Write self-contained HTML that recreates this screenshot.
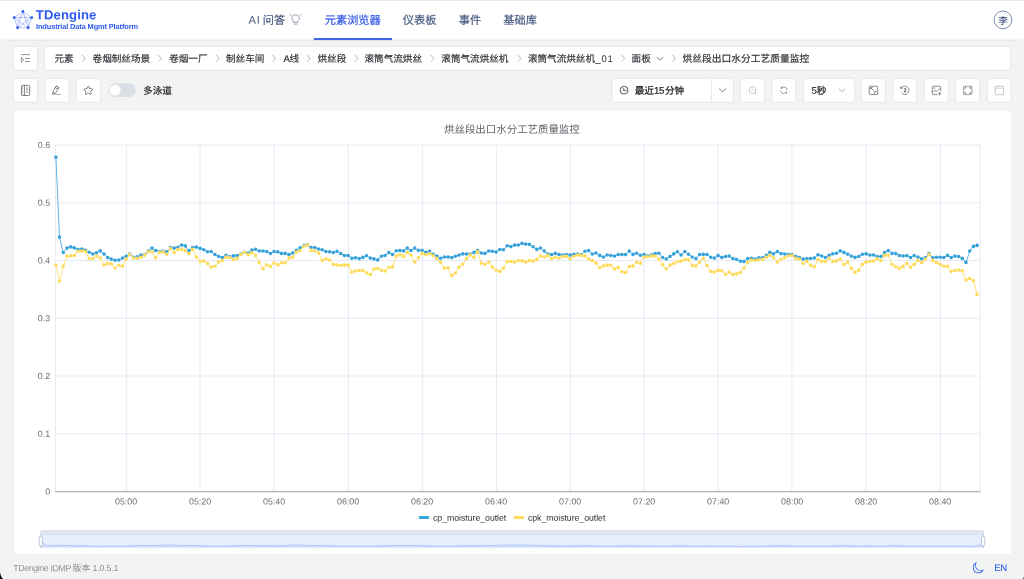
<!DOCTYPE html>
<html lang="zh-CN">
<head>
<meta charset="utf-8">
<title>TDengine IDMP</title>
<style>
html,body{margin:0;padding:0}
body{width:1024px;height:579px;overflow:hidden;position:relative;background:#f2f3f3;font-family:"Liberation Sans",sans-serif;color:#303133}
section,header,footer,nav{position:absolute;left:0;top:0;width:1024px;height:579px;pointer-events:none}
svg.layer{position:absolute;left:0;top:0;display:block;overflow:hidden;will-change:transform}
svg.layer text{white-space:pre;text-rendering:geometricPrecision}
</style>
</head>
<body>
<header>
<svg class="layer" width="1024" height="579" viewBox="0 0 1024 579" font-family="Liberation Sans, Noto Sans CJK SC, sans-serif">
<rect x="0" y="0" width="1024" height="0.9" fill="#e6e6e6"/>
<rect x="0" y="0.9" width="1024" height="38.8" fill="#fff"/>
<rect x="0" y="39.6" width="1024" height="1.2" fill="#e7e8ec"/>
<path d="M0 40.6v3.8q0 -3.4 3.6 -3.6zM1024 40.6v3.8q0 -3.4 -3.6 -3.6z" fill="#fbfbfc"/>
<g stroke="#3d66f2" stroke-width="0.5" fill="none" opacity="0.75"><path d="M22.9 11.4L31.75 17.6L28.2 27.75L17.6 27.75L14.1 17.6Z"/><path d="M22.9 11.4L28.2 27.75L14.1 17.6L31.75 17.6L17.6 27.75Z"/><path d="M17.6 27.75C16.2 23 18 18.5 22.9 13.8C27.8 18.5 29.6 23 28.2 27.75" opacity="0.6"/></g>
<g fill="#2b59f0"><circle cx="22.9" cy="11.4" r="1.4"/><circle cx="14.1" cy="17.6" r="1.4"/><circle cx="31.75" cy="17.6" r="1.4"/><circle cx="17.6" cy="27.75" r="1.4"/><circle cx="28.2" cy="27.75" r="1.4"/></g>
<text x="35.80" y="19.20" transform="rotate(0.05 35.80 19.20)" font-size="13.1" fill="#2b59f0" font-weight="bold" textLength="60.60" lengthAdjust="spacing">TDengine</text>
<text x="36.00" y="28.95" transform="rotate(0.05 36.00 28.95)" font-size="7.4" fill="#2b59f0" font-weight="bold" textLength="102.00" lengthAdjust="spacing">Industrial Data Mgmt Platform</text>
<text x="248.50" y="23.65" transform="rotate(0.05 248.50 23.65)" font-size="11.2" fill="#485c80" textLength="11.40" lengthAdjust="spacing">AI</text>
<text x="262.70" y="23.96" font-size="11.2" fill="#485c80" stroke="#485c80" stroke-width="0.2">问答</text>
<g fill="none" stroke="#6f7d99" stroke-width="0.7" stroke-linecap="round" transform="translate(289.6 13)"><path d="M4 8.3C2.9 7.6 2.3 6.5 2.3 5.3C2.3 3.3 3.9 1.8 6 1.8C8.1 1.8 9.7 3.3 9.7 5.3C9.7 6.5 9.1 7.6 8 8.3V9.4H4Z"/><path d="M4.6 11.1H7.4"/><path d="M0.6 1.6L1.8 2.4M11.4 1.6L10.2 2.4"/></g>
<text x="324.80" y="23.96" font-size="11.2" fill="#3358e6" stroke="#3358e6" stroke-width="0.2">元素浏览器</text>
<rect x="313.7" y="38" width="78.3" height="2.05" fill="#4066e8"/>
<text x="402.80" y="23.96" font-size="11.2" fill="#485c80" stroke="#485c80" stroke-width="0.2">仪表板</text>
<text x="458.80" y="23.96" font-size="11.2" fill="#485c80" stroke="#485c80" stroke-width="0.2">事件</text>
<text x="503.30" y="23.96" font-size="11.2" fill="#485c80" stroke="#485c80" stroke-width="0.2">基础库</text>
<circle cx="1002.95" cy="19.85" r="8.85" fill="#fff" stroke="#5a7199" stroke-width="0.8"/>
<text x="998.20" y="23.51" font-size="9.5" fill="#41587f" stroke="#41587f" stroke-width="0.17">李</text>
</svg>
</header>
<nav aria-label="breadcrumb">
<svg class="layer" width="1024" height="579" viewBox="0 0 1024 579" font-family="Liberation Sans, Noto Sans CJK SC, sans-serif">
<rect x="13.50" y="46.40" width="24.10" height="24.10" rx="2.6" fill="#fff" stroke="#e2e4ee" stroke-width="0.9"/>
<g fill="none" stroke="#6c6f76" stroke-width="0.75"><path d="M21 54.6H29.9M25.1 58.5H29.9M25.1 61.6H29.9"/><path d="M21.3 57.3V62.2L23.9 59.75Z" stroke-linejoin="round"/></g>
<rect x="44.60" y="46.40" width="965.70" height="24.10" rx="2.6" fill="#fff" stroke="#e2e4ee" stroke-width="0.9"/>
<text x="54.50" y="62.10" font-size="9.6" fill="#2f3237" stroke="#2f3237" stroke-width="0.17">元素</text>
<text x="92.60" y="62.10" font-size="9.6" fill="#2f3237" stroke="#2f3237" stroke-width="0.17">卷烟制丝场景</text>
<text x="169.20" y="62.10" font-size="9.6" fill="#2f3237" stroke="#2f3237" stroke-width="0.17">卷烟一厂</text>
<text x="226.00" y="62.10" font-size="9.6" fill="#2f3237" stroke="#2f3237" stroke-width="0.17">制丝车间</text>
<path transform="translate(78.85 53.65) scale(0.009375)" d="M340.864 149.312a30.592 30.592 0 0 0 0 42.752L652.736 512 340.864 831.872a30.592 30.592 0 0 0 0 42.752 29.12 29.12 0 0 0 41.728 0L714.24 534.336a32 32 0 0 0 0-44.672L382.592 149.376a29.12 29.12 0 0 0-41.728 0z" fill="#a3a6ad"/>
<path transform="translate(154.95 53.65) scale(0.009375)" d="M340.864 149.312a30.592 30.592 0 0 0 0 42.752L652.736 512 340.864 831.872a30.592 30.592 0 0 0 0 42.752 29.12 29.12 0 0 0 41.728 0L714.24 534.336a32 32 0 0 0 0-44.672L382.592 149.376a29.12 29.12 0 0 0-41.728 0z" fill="#a3a6ad"/>
<path transform="translate(212.85 53.65) scale(0.009375)" d="M340.864 149.312a30.592 30.592 0 0 0 0 42.752L652.736 512 340.864 831.872a30.592 30.592 0 0 0 0 42.752 29.12 29.12 0 0 0 41.728 0L714.24 534.336a32 32 0 0 0 0-44.672L382.592 149.376a29.12 29.12 0 0 0-41.728 0z" fill="#a3a6ad"/>
<path transform="translate(269.15 53.65) scale(0.009375)" d="M340.864 149.312a30.592 30.592 0 0 0 0 42.752L652.736 512 340.864 831.872a30.592 30.592 0 0 0 0 42.752 29.12 29.12 0 0 0 41.728 0L714.24 534.336a32 32 0 0 0 0-44.672L382.592 149.376a29.12 29.12 0 0 0-41.728 0z" fill="#a3a6ad"/>
<path transform="translate(303.65 53.65) scale(0.009375)" d="M340.864 149.312a30.592 30.592 0 0 0 0 42.752L652.736 512 340.864 831.872a30.592 30.592 0 0 0 0 42.752 29.12 29.12 0 0 0 41.728 0L714.24 534.336a32 32 0 0 0 0-44.672L382.592 149.376a29.12 29.12 0 0 0-41.728 0z" fill="#a3a6ad"/>
<path transform="translate(351.35 53.65) scale(0.009375)" d="M340.864 149.312a30.592 30.592 0 0 0 0 42.752L652.736 512 340.864 831.872a30.592 30.592 0 0 0 0 42.752 29.12 29.12 0 0 0 41.728 0L714.24 534.336a32 32 0 0 0 0-44.672L382.592 149.376a29.12 29.12 0 0 0-41.728 0z" fill="#a3a6ad"/>
<path transform="translate(427.55 53.65) scale(0.009375)" d="M340.864 149.312a30.592 30.592 0 0 0 0 42.752L652.736 512 340.864 831.872a30.592 30.592 0 0 0 0 42.752 29.12 29.12 0 0 0 41.728 0L714.24 534.336a32 32 0 0 0 0-44.672L382.592 149.376a29.12 29.12 0 0 0-41.728 0z" fill="#a3a6ad"/>
<path transform="translate(514.45 53.65) scale(0.009375)" d="M340.864 149.312a30.592 30.592 0 0 0 0 42.752L652.736 512 340.864 831.872a30.592 30.592 0 0 0 0 42.752 29.12 29.12 0 0 0 41.728 0L714.24 534.336a32 32 0 0 0 0-44.672L382.592 149.376a29.12 29.12 0 0 0-41.728 0z" fill="#a3a6ad"/>
<path transform="translate(618.15 53.65) scale(0.009375)" d="M340.864 149.312a30.592 30.592 0 0 0 0 42.752L652.736 512 340.864 831.872a30.592 30.592 0 0 0 0 42.752 29.12 29.12 0 0 0 41.728 0L714.24 534.336a32 32 0 0 0 0-44.672L382.592 149.376a29.12 29.12 0 0 0-41.728 0z" fill="#a3a6ad"/>
<path transform="translate(669.05 53.65) scale(0.009375)" d="M340.864 149.312a30.592 30.592 0 0 0 0 42.752L652.736 512 340.864 831.872a30.592 30.592 0 0 0 0 42.752 29.12 29.12 0 0 0 41.728 0L714.24 534.336a32 32 0 0 0 0-44.672L382.592 149.376a29.12 29.12 0 0 0-41.728 0z" fill="#a3a6ad"/>
<text x="283.40" y="61.90" transform="rotate(0.05 283.40 61.90)" font-size="9.6" fill="#2f3237" stroke="#2f3237" stroke-width="0.2">A</text>
<text x="289.50" y="62.10" font-size="9.6" fill="#2f3237" stroke="#2f3237" stroke-width="0.17">线</text>
<text x="317.50" y="62.10" font-size="9.6" fill="#2f3237" stroke="#2f3237" stroke-width="0.17">烘丝段</text>
<text x="364.50" y="62.10" font-size="9.6" fill="#2f3237" stroke="#2f3237" stroke-width="0.17">滚筒气流烘丝</text>
<text x="441.30" y="62.10" font-size="9.6" fill="#2f3237" stroke="#2f3237" stroke-width="0.17">滚筒气流烘丝机</text>
<text x="527.90" y="62.10" font-size="9.6" fill="#2f3237" stroke="#2f3237" stroke-width="0.17">滚筒气流烘丝机</text>
<text x="595.30" y="61.90" transform="rotate(0.05 595.30 61.90)" font-size="9.6" fill="#2f3237" textLength="17.60" lengthAdjust="spacing">_01</text>
<text x="631.60" y="62.10" font-size="9.6" fill="#2f3237" stroke="#2f3237" stroke-width="0.17">面板</text>
<path transform="translate(655.20 53.75) scale(0.009375)" d="M831.872 340.864 512 652.672 192.128 340.864a30.592 30.592 0 0 0-42.752 0 29.12 29.12 0 0 0 0 41.6L489.664 714.24a32 32 0 0 0 44.672 0l340.288-331.712a29.12 29.12 0 0 0 0-41.728 30.592 30.592 0 0 0-42.752 0z" fill="#5d6066"/>
<text x="682.50" y="62.16" font-size="9.75" fill="#2f3237" stroke="#2f3237" stroke-width="0.18">烘丝段出口水分工艺质量监控</text>
</svg>
</nav>
<section aria-label="toolbar">
<svg class="layer" width="1024" height="579" viewBox="0 0 1024 579" font-family="Liberation Sans, Noto Sans CJK SC, sans-serif">
<rect x="13.50" y="78.20" width="24.10" height="24.10" rx="2.6" fill="#fff" stroke="#e2e4ee" stroke-width="0.9"/>
<rect x="44.90" y="78.20" width="24.10" height="24.10" rx="2.6" fill="#fff" stroke="#e2e4ee" stroke-width="0.9"/>
<rect x="76.40" y="78.20" width="24.10" height="24.10" rx="2.6" fill="#fff" stroke="#e2e4ee" stroke-width="0.9"/>
<g fill="none" stroke="#5d6066" stroke-width="0.8"><rect x="21.5" y="85.4" width="8.2" height="10.1" rx="1"/><path d="M24.4 85.4V95.5"/><path d="M26 88.05H28.2M26 90H28.2M26 92.1H28.2" stroke-width="0.7"/><path d="M22.3 85.8V95.1" stroke-width="0.5" opacity="0.6"/></g>
<path transform="translate(51.05 85.05) scale(0.010449)" d="m199.04 672.64 193.984 112 224-387.968-193.92-112-224 388.032zm-23.872 60.16 32.896 148.288 144.896-45.696zM455.04 229.248l193.92 112 56.704-98.112-193.984-112-56.64 98.112zM104.32 708.8l384-665.024 304.768 175.936L409.152 884.8h.064l-248.448 78.336zm384 254.272v-64h448v64h-448z" fill="#5d6066"/>
<path transform="translate(83.00 84.95) scale(0.010449)" d="m512 747.84 228.16 119.936a6.4 6.4 0 0 0 9.28-6.72l-43.52-254.08 184.512-179.904a6.4 6.4 0 0 0-3.52-10.88l-255.104-37.12L517.76 147.904a6.4 6.4 0 0 0-11.52 0L392.192 379.072l-255.104 37.12a6.4 6.4 0 0 0-3.52 10.88L318.08 606.976l-43.584 254.08a6.4 6.4 0 0 0 9.28 6.72zM313.6 924.48a70.4 70.4 0 0 1-102.144-74.24l37.888-220.928L88.96 472.96A70.4 70.4 0 0 1 128 352.896l221.76-32.256 99.2-200.96a70.4 70.4 0 0 1 126.208 0l99.2 200.96 221.824 32.256a70.4 70.4 0 0 1 39.04 120.064L774.72 629.376l37.888 220.928a70.4 70.4 0 0 1-102.144 74.24L512 820.096l-198.4 104.32z" fill="#5d6066"/>
<rect x="108.4" y="83.3" width="27.4" height="13.8" rx="6.9" fill="#dcdfe6"/><circle cx="115.1" cy="90.2" r="5.55" fill="#fff"/>
<text x="143.20" y="94.00" font-size="9.6" font-weight="500" fill="#26292e" stroke="#26292e" stroke-width="0.1">多泳道</text>
<rect x="612.00" y="78.20" width="121.40" height="24.10" rx="2.6" fill="#fff" stroke="#e2e4ee" stroke-width="0.9"/>
<path d="M711.4 78.6V101.9" stroke="#e2e4ee" stroke-width="0.9"/>
<path transform="translate(619.40 85.55) scale(0.009180)" d="M512 896a384 384 0 1 0 0-768 384 384 0 0 0 0 768m0 64a448 448 0 1 1 0-896 448 448 0 0 1 0 896M480 256a32 32 0 0 1 32 32v256a32 32 0 0 1-64 0V288a32 32 0 0 1 32-32M480 512h256q32 0 32 32t-32 32H480q-32 0-32-32t32-32" fill="#3f4247" stroke="#3f4247" stroke-width="26"/>
<text x="634.70" y="93.90" font-size="9.6" fill="#26292e" stroke="#26292e" stroke-width="0.27">最近</text>
<text x="654.10" y="93.75" transform="rotate(0.05 654.10 93.75)" font-size="9.7" fill="#26292e" textLength="10.30" lengthAdjust="spacing" stroke="#26292e" stroke-width="0.25">15</text>
<text x="664.90" y="93.90" font-size="9.6" fill="#26292e" stroke="#26292e" stroke-width="0.27">分钟</text>
<path transform="translate(717.70 85.30) scale(0.009375)" d="M831.872 340.864 512 652.672 192.128 340.864a30.592 30.592 0 0 0-42.752 0 29.12 29.12 0 0 0 0 41.6L489.664 714.24a32 32 0 0 0 44.672 0l340.288-331.712a29.12 29.12 0 0 0 0-41.728 30.592 30.592 0 0 0-42.752 0z" fill="#5d6066"/>
<rect x="740.50" y="78.20" width="24.00" height="24.10" rx="2.6" fill="#fff" stroke="#e2e4ee" stroke-width="0.9"/>
<path transform="translate(748.25 85.85) scale(0.008789)" d="m795.904 750.72 124.992 124.928a32 32 0 0 1-45.248 45.248L750.656 795.904a416 416 0 1 1 45.248-45.248zM480 832a352 352 0 1 0 0-704 352 352 0 0 0 0 704M352 448h256a32 32 0 0 1 0 64H352a32 32 0 0 1 0-64" fill="#96999f"/>
<rect x="771.80" y="78.20" width="24.10" height="24.10" rx="2.6" fill="#fff" stroke="#e2e4ee" stroke-width="0.9"/>
<path transform="translate(779.05 85.40) scale(0.009375)" d="M771.776 794.88A384 384 0 0 1 128 512h64a320 320 0 0 0 555.712 216.448H654.72a32 32 0 1 1 0-64h149.056a32 32 0 0 1 32 32v148.928a32 32 0 1 1-64 0v-50.56zM276.288 295.616h92.992a32 32 0 0 1 0 64H220.16a32 32 0 0 1-32-32V178.56a32 32 0 0 1 64 0v50.56A384 384 0 0 1 896.128 512h-64a320 320 0 0 0-555.776-216.384z" fill="#6b6e74"/>
<rect x="803.60" y="78.20" width="51.00" height="24.10" rx="2.6" fill="#fff" stroke="#e2e4ee" stroke-width="0.9"/>
<text x="811.40" y="93.75" transform="rotate(0.05 811.40 93.75)" font-size="9.7" fill="#26292e" stroke="#26292e" stroke-width="0.12">5</text>
<text x="816.70" y="93.90" font-size="9.6" fill="#26292e" stroke="#26292e" stroke-width="0.27">秒</text>
<path transform="translate(837.60 85.60) scale(0.008789)" d="M831.872 340.864 512 652.672 192.128 340.864a30.592 30.592 0 0 0-42.752 0 29.12 29.12 0 0 0 0 41.6L489.664 714.24a32 32 0 0 0 44.672 0l340.288-331.712a29.12 29.12 0 0 0 0-41.728 30.592 30.592 0 0 0-42.752 0z" fill="#acafb5"/>
<rect x="861.50" y="78.20" width="23.90" height="24.10" rx="2.6" fill="#fff" stroke="#e2e4ee" stroke-width="0.9"/>
<rect x="892.80" y="78.20" width="23.90" height="24.10" rx="2.6" fill="#fff" stroke="#e2e4ee" stroke-width="0.9"/>
<rect x="924.40" y="78.20" width="23.90" height="24.10" rx="2.6" fill="#fff" stroke="#e2e4ee" stroke-width="0.9"/>
<rect x="955.70" y="78.20" width="23.90" height="24.10" rx="2.6" fill="#fff" stroke="#e2e4ee" stroke-width="0.9"/>
<rect x="987.30" y="78.20" width="23.90" height="24.10" rx="2.6" fill="#fff" stroke="#e2e4ee" stroke-width="0.9"/>
<g fill="none" stroke="#6b6e74" stroke-width="0.8"><path d="M874.2 94.6H870.2Q869.2 94.6 869.2 93.6V87.2Q869.2 86.2 870.2 86.2H876.7Q877.7 86.2 877.7 87.2V91.2"/><rect x="874.4" y="91.5" width="3.3" height="3.1" rx="0.6"/><path d="M873.8 90.8L870.6 87.6M870.6 89.6V87.6H872.6"/></g>
<g fill="none" stroke="#6b6e74" stroke-width="0.75"><path d="M901.4 87.9A4.15 4.15 0 1 1 901.4 92.7"/><path d="M900.3 86.5L900.6 88.5L902.5 88.2Z" fill="#6b6e74" stroke-width="0.4"/></g>
<text x="905.00" y="92.20" transform="rotate(0.05 905.00 92.20)" font-size="5.7" fill="#55585e" font-weight="bold" text-anchor="middle">2</text>
<g fill="none" stroke="#6b6e74" stroke-width="0.8"><path d="M937.6 94.6H933.2Q932.2 94.6 932.2 93.6V87.2Q932.2 86.2 933.2 86.2H939.7Q940.7 86.2 940.7 87.2V91.4"/><path d="M932.4 92.6L935 90.3L936.6 91.6L940.5 88" stroke-width="0.7"/><circle cx="934.3" cy="88.2" r="0.55" stroke-width="0.6"/><path d="M939.6 92.3V95.3M938.1 93.8H941.1"/></g>
<g fill="none" stroke="#7d8086" stroke-width="0.75"><rect x="963.5" y="86.2" width="8.5" height="8.4" rx="0.8"/><path d="M964.6 87.3h2l-2 2ZM970.9 87.3v2l-2 -2ZM970.9 93.5h-2l2 -2ZM964.6 93.5v-2l2 2Z" fill="#63666c" stroke="none"/></g>
<g fill="none" stroke="#b4b7bd" stroke-width="0.8"><rect x="995.2" y="86.2" width="8.4" height="8.5" rx="1.1"/><path d="M995.2 88.2H1003.6" stroke-width="0.6"/></g>
</svg>
</section>
<section aria-label="chart">
<svg class="layer" width="1024" height="579" viewBox="0 0 1024 579" font-family="Liberation Sans, Noto Sans CJK SC, sans-serif">
<rect x="13.7" y="110.3" width="997.9" height="444.0" rx="2.8" fill="#fff" stroke="#ebecef" stroke-width="0.6"/>
<text x="444.07" y="133.37" font-size="10.45" fill="#5c5f66">烘丝段出口水分工艺质量监控</text>
<path d="M55.40 433.75H980.20M55.40 376.00H980.20M55.40 318.25H980.20M55.40 260.50H980.20M55.40 202.75H980.20M55.40 145.00H980.20M55.40 145.00V491.50M126.40 145.00V491.50M200.00 145.00V491.50M274.10 145.00V491.50M348.40 145.00V491.50M422.40 145.00V491.50M496.40 145.00V491.50M570.40 145.00V491.50M644.10 145.00V491.50M717.90 145.00V491.50M791.90 145.00V491.50M866.25 145.00V491.50M940.50 145.00V491.50M980.20 145.00V491.50" stroke="#e3e8f3" stroke-width="0.9" fill="none"/>
<path d="M55.10 491.72H980.50" stroke="#74767f" stroke-width="0.74" fill="none"/>
<g>
<text x="50.20" y="494.50" transform="rotate(0.05 50.20 494.50)" font-size="8.9" fill="#6e7079" text-anchor="end">0</text>
<text x="50.20" y="436.75" transform="rotate(0.05 50.20 436.75)" font-size="8.9" fill="#6e7079" text-anchor="end">0.1</text>
<text x="50.20" y="379.00" transform="rotate(0.05 50.20 379.00)" font-size="8.9" fill="#6e7079" text-anchor="end">0.2</text>
<text x="50.20" y="321.25" transform="rotate(0.05 50.20 321.25)" font-size="8.9" fill="#6e7079" text-anchor="end">0.3</text>
<text x="50.20" y="263.50" transform="rotate(0.05 50.20 263.50)" font-size="8.9" fill="#6e7079" text-anchor="end">0.4</text>
<text x="50.20" y="205.75" transform="rotate(0.05 50.20 205.75)" font-size="8.9" fill="#6e7079" text-anchor="end">0.5</text>
<text x="50.20" y="148.00" transform="rotate(0.05 50.20 148.00)" font-size="8.9" fill="#6e7079" text-anchor="end">0.6</text>
<text x="126.10" y="504.60" transform="rotate(0.05 126.10 504.60)" font-size="8.9" fill="#6e7079" text-anchor="middle">05:00</text>
<text x="200.11" y="504.60" transform="rotate(0.05 200.11 504.60)" font-size="8.9" fill="#6e7079" text-anchor="middle">05:20</text>
<text x="274.12" y="504.60" transform="rotate(0.05 274.12 504.60)" font-size="8.9" fill="#6e7079" text-anchor="middle">05:40</text>
<text x="348.13" y="504.60" transform="rotate(0.05 348.13 504.60)" font-size="8.9" fill="#6e7079" text-anchor="middle">06:00</text>
<text x="422.14" y="504.60" transform="rotate(0.05 422.14 504.60)" font-size="8.9" fill="#6e7079" text-anchor="middle">06:20</text>
<text x="496.15" y="504.60" transform="rotate(0.05 496.15 504.60)" font-size="8.9" fill="#6e7079" text-anchor="middle">06:40</text>
<text x="570.16" y="504.60" transform="rotate(0.05 570.16 504.60)" font-size="8.9" fill="#6e7079" text-anchor="middle">07:00</text>
<text x="644.17" y="504.60" transform="rotate(0.05 644.17 504.60)" font-size="8.9" fill="#6e7079" text-anchor="middle">07:20</text>
<text x="718.18" y="504.60" transform="rotate(0.05 718.18 504.60)" font-size="8.9" fill="#6e7079" text-anchor="middle">07:40</text>
<text x="792.19" y="504.60" transform="rotate(0.05 792.19 504.60)" font-size="8.9" fill="#6e7079" text-anchor="middle">08:00</text>
<text x="866.20" y="504.60" transform="rotate(0.05 866.20 504.60)" font-size="8.9" fill="#6e7079" text-anchor="middle">08:20</text>
<text x="940.21" y="504.60" transform="rotate(0.05 940.21 504.60)" font-size="8.9" fill="#6e7079" text-anchor="middle">08:40</text>
</g>
<path d="M55.9 157.2L59.5 237.1L63.2 252.5L67.0 248.1L70.7 246.9L74.3 247.9L78.0 249.4L81.8 249.0L85.5 250.4L89.2 252.2L92.8 254.0L96.5 252.8L100.2 250.9L104.0 254.0L107.7 257.5L111.3 259.1L115.0 260.2L118.8 260.0L122.5 258.0L126.2 256.2L129.8 254.0L133.6 257.2L137.2 256.9L140.9 255.1L144.7 254.6L148.3 251.0L152.0 248.1L155.7 250.5L159.4 251.5L163.1 251.0L166.8 251.9L170.5 247.5L174.2 248.1L177.9 247.2L181.6 245.0L185.3 245.9L189.0 250.6L192.7 247.5L196.4 247.1L200.1 248.4L203.8 249.8L207.5 251.8L211.2 251.5L214.9 254.5L218.6 256.5L222.3 257.5L226.0 255.2L229.7 256.9L233.4 255.9L237.1 255.5L240.8 254.0L244.5 252.2L248.2 253.1L251.9 250.0L255.6 249.2L259.3 251.0L263.0 251.0L266.7 251.6L270.4 253.5L274.1 251.5L277.8 251.9L281.5 253.4L285.2 253.4L288.9 254.6L292.6 253.0L296.3 250.4L300.0 247.8L303.7 245.6L307.4 244.8L311.1 247.6L314.8 247.5L318.5 249.0L322.2 249.8L325.9 251.5L329.6 251.8L333.3 252.6L337.0 251.2L340.7 253.5L344.4 255.5L348.1 255.5L351.8 258.2L355.5 257.8L359.2 258.6L362.9 257.4L366.6 255.8L370.3 258.1L374.0 258.9L377.7 259.9L381.4 256.2L385.1 255.5L388.8 252.6L392.5 254.5L396.2 250.8L399.9 250.5L403.6 250.9L407.3 248.1L411.0 250.5L414.7 248.1L418.4 250.4L422.1 250.2L425.8 252.2L429.5 251.4L433.2 254.4L436.9 256.0L440.6 258.2L444.3 257.0L448.0 257.1L451.7 257.6L455.4 256.2L459.1 255.1L462.8 253.9L466.5 254.0L470.2 254.0L473.9 252.4L477.6 250.5L481.3 253.0L485.0 253.4L488.7 251.0L492.4 251.2L496.1 252.0L499.8 249.5L503.5 249.8L507.2 245.8L510.9 246.6L514.6 245.1L518.3 245.0L522.0 243.4L525.7 244.1L529.4 244.4L533.1 246.8L536.8 249.4L540.5 248.0L544.2 251.1L547.9 254.0L551.6 254.5L555.3 253.4L559.0 254.5L562.7 255.0L566.4 254.5L570.1 255.1L573.8 254.4L577.5 254.0L581.2 254.8L584.9 251.2L588.6 250.6L592.3 254.0L596.0 253.0L599.7 255.4L603.4 257.1L607.1 255.0L610.8 255.5L614.5 256.1L618.2 254.5L621.9 254.6L625.6 254.6L629.3 251.1L633.0 254.4L636.7 253.2L640.4 255.2L644.1 254.5L647.8 256.0L651.5 254.8L655.2 253.6L658.9 253.2L662.6 257.5L666.3 259.0L670.0 256.5L673.7 253.9L677.4 251.8L681.1 255.0L684.8 251.5L688.5 254.2L692.2 257.0L695.9 258.5L699.6 254.5L703.3 254.4L707.0 254.5L710.7 257.2L714.4 258.1L718.1 255.6L721.8 257.4L725.5 256.5L729.2 256.0L732.9 258.5L736.6 259.5L740.3 261.2L744.0 261.4L747.7 258.5L751.4 258.2L755.1 259.0L758.8 257.8L762.5 257.8L766.2 255.4L769.9 252.4L773.6 253.8L777.3 251.6L781.0 253.6L784.7 254.0L788.4 254.4L792.1 254.6L795.8 256.5L799.5 257.5L803.2 259.1L806.9 258.5L810.6 258.5L814.3 258.0L818.0 254.8L821.7 256.0L825.4 257.5L829.1 255.4L832.8 253.8L836.5 253.2L840.2 250.9L843.9 252.4L847.6 254.1L851.3 256.1L855.0 257.4L858.7 256.5L862.4 254.2L866.1 253.9L869.8 255.1L873.5 255.0L877.2 256.6L880.9 256.5L884.6 252.6L888.3 250.6L892.0 253.4L895.7 253.6L899.4 255.5L903.1 256.0L906.8 255.6L910.5 257.6L914.2 255.5L917.9 257.0L921.6 258.8L925.3 257.8L929.0 253.5L932.7 257.8L936.4 257.2L940.1 257.2L943.8 257.5L947.5 255.4L951.2 257.6L954.9 256.1L958.6 256.5L962.3 258.4L966.0 262.4L969.7 251.1L973.4 246.4L977.1 245.4" stroke="#37a2da" stroke-width="0.8" fill="none" stroke-linejoin="round"/><path d="M55.9 157.2h.01M59.5 237.1h.01M63.2 252.5h.01M67.0 248.1h.01M70.7 246.9h.01M74.3 247.9h.01M78.0 249.4h.01M81.8 249.0h.01M85.5 250.4h.01M89.2 252.2h.01M92.8 254.0h.01M96.5 252.8h.01M100.2 250.9h.01M104.0 254.0h.01M107.7 257.5h.01M111.3 259.1h.01M115.0 260.2h.01M118.8 260.0h.01M122.5 258.0h.01M126.2 256.2h.01M129.8 254.0h.01M133.6 257.2h.01M137.2 256.9h.01M140.9 255.1h.01M144.7 254.6h.01M148.3 251.0h.01M152.0 248.1h.01M155.7 250.5h.01M159.4 251.5h.01M163.1 251.0h.01M166.8 251.9h.01M170.5 247.5h.01M174.2 248.1h.01M177.9 247.2h.01M181.6 245.0h.01M185.3 245.9h.01M189.0 250.6h.01M192.7 247.5h.01M196.4 247.1h.01M200.1 248.4h.01M203.8 249.8h.01M207.5 251.8h.01M211.2 251.5h.01M214.9 254.5h.01M218.6 256.5h.01M222.3 257.5h.01M226.0 255.2h.01M229.7 256.9h.01M233.4 255.9h.01M237.1 255.5h.01M240.8 254.0h.01M244.5 252.2h.01M248.2 253.1h.01M251.9 250.0h.01M255.6 249.2h.01M259.3 251.0h.01M263.0 251.0h.01M266.7 251.6h.01M270.4 253.5h.01M274.1 251.5h.01M277.8 251.9h.01M281.5 253.4h.01M285.2 253.4h.01M288.9 254.6h.01M292.6 253.0h.01M296.3 250.4h.01M300.0 247.8h.01M303.7 245.6h.01M307.4 244.8h.01M311.1 247.6h.01M314.8 247.5h.01M318.5 249.0h.01M322.2 249.8h.01M325.9 251.5h.01M329.6 251.8h.01M333.3 252.6h.01M337.0 251.2h.01M340.7 253.5h.01M344.4 255.5h.01M348.1 255.5h.01M351.8 258.2h.01M355.5 257.8h.01M359.2 258.6h.01M362.9 257.4h.01M366.6 255.8h.01M370.3 258.1h.01M374.0 258.9h.01M377.7 259.9h.01M381.4 256.2h.01M385.1 255.5h.01M388.8 252.6h.01M392.5 254.5h.01M396.2 250.8h.01M399.9 250.5h.01M403.6 250.9h.01M407.3 248.1h.01M411.0 250.5h.01M414.7 248.1h.01M418.4 250.4h.01M422.1 250.2h.01M425.8 252.2h.01M429.5 251.4h.01M433.2 254.4h.01M436.9 256.0h.01M440.6 258.2h.01M444.3 257.0h.01M448.0 257.1h.01M451.7 257.6h.01M455.4 256.2h.01M459.1 255.1h.01M462.8 253.9h.01M466.5 254.0h.01M470.2 254.0h.01M473.9 252.4h.01M477.6 250.5h.01M481.3 253.0h.01M485.0 253.4h.01M488.7 251.0h.01M492.4 251.2h.01M496.1 252.0h.01M499.8 249.5h.01M503.5 249.8h.01M507.2 245.8h.01M510.9 246.6h.01M514.6 245.1h.01M518.3 245.0h.01M522.0 243.4h.01M525.7 244.1h.01M529.4 244.4h.01M533.1 246.8h.01M536.8 249.4h.01M540.5 248.0h.01M544.2 251.1h.01M547.9 254.0h.01M551.6 254.5h.01M555.3 253.4h.01M559.0 254.5h.01M562.7 255.0h.01M566.4 254.5h.01M570.1 255.1h.01M573.8 254.4h.01M577.5 254.0h.01M581.2 254.8h.01M584.9 251.2h.01M588.6 250.6h.01M592.3 254.0h.01M596.0 253.0h.01M599.7 255.4h.01M603.4 257.1h.01M607.1 255.0h.01M610.8 255.5h.01M614.5 256.1h.01M618.2 254.5h.01M621.9 254.6h.01M625.6 254.6h.01M629.3 251.1h.01M633.0 254.4h.01M636.7 253.2h.01M640.4 255.2h.01M644.1 254.5h.01M647.8 256.0h.01M651.5 254.8h.01M655.2 253.6h.01M658.9 253.2h.01M662.6 257.5h.01M666.3 259.0h.01M670.0 256.5h.01M673.7 253.9h.01M677.4 251.8h.01M681.1 255.0h.01M684.8 251.5h.01M688.5 254.2h.01M692.2 257.0h.01M695.9 258.5h.01M699.6 254.5h.01M703.3 254.4h.01M707.0 254.5h.01M710.7 257.2h.01M714.4 258.1h.01M718.1 255.6h.01M721.8 257.4h.01M725.5 256.5h.01M729.2 256.0h.01M732.9 258.5h.01M736.6 259.5h.01M740.3 261.2h.01M744.0 261.4h.01M747.7 258.5h.01M751.4 258.2h.01M755.1 259.0h.01M758.8 257.8h.01M762.5 257.8h.01M766.2 255.4h.01M769.9 252.4h.01M773.6 253.8h.01M777.3 251.6h.01M781.0 253.6h.01M784.7 254.0h.01M788.4 254.4h.01M792.1 254.6h.01M795.8 256.5h.01M799.5 257.5h.01M803.2 259.1h.01M806.9 258.5h.01M810.6 258.5h.01M814.3 258.0h.01M818.0 254.8h.01M821.7 256.0h.01M825.4 257.5h.01M829.1 255.4h.01M832.8 253.8h.01M836.5 253.2h.01M840.2 250.9h.01M843.9 252.4h.01M847.6 254.1h.01M851.3 256.1h.01M855.0 257.4h.01M858.7 256.5h.01M862.4 254.2h.01M866.1 253.9h.01M869.8 255.1h.01M873.5 255.0h.01M877.2 256.6h.01M880.9 256.5h.01M884.6 252.6h.01M888.3 250.6h.01M892.0 253.4h.01M895.7 253.6h.01M899.4 255.5h.01M903.1 256.0h.01M906.8 255.6h.01M910.5 257.6h.01M914.2 255.5h.01M917.9 257.0h.01M921.6 258.8h.01M925.3 257.8h.01M929.0 253.5h.01M932.7 257.8h.01M936.4 257.2h.01M940.1 257.2h.01M943.8 257.5h.01M947.5 255.4h.01M951.2 257.6h.01M954.9 256.1h.01M958.6 256.5h.01M962.3 258.4h.01M966.0 262.4h.01M969.7 251.1h.01M973.4 246.4h.01M977.1 245.4h.01" stroke="#37a2da" stroke-width="3.6" stroke-linecap="round" fill="none"/>
<path d="M55.9 265.1L59.5 281.1L63.2 266.4L67.0 256.1L70.7 255.8L74.3 255.4L78.0 251.2L81.8 251.0L85.5 251.5L89.2 258.5L92.8 258.5L96.5 256.0L100.2 258.1L104.0 265.0L107.7 263.4L111.3 263.9L115.0 268.0L118.8 265.2L122.5 266.2L126.2 259.1L129.8 254.6L133.6 258.1L137.2 258.2L140.9 257.2L144.7 255.1L148.3 251.8L152.0 251.8L155.7 257.8L159.4 252.2L163.1 251.9L166.8 254.2L170.5 248.6L174.2 252.5L177.9 249.4L181.6 249.4L185.3 250.8L189.0 253.8L192.7 249.4L196.4 257.0L200.1 261.5L203.8 261.1L207.5 263.6L211.2 267.1L214.9 266.2L218.6 262.1L222.3 260.6L226.0 257.1L229.7 257.5L233.4 259.8L237.1 258.4L240.8 254.6L244.5 252.5L248.2 254.4L251.9 252.8L255.6 255.5L259.3 262.2L263.0 268.8L266.7 264.8L270.4 266.4L274.1 263.1L277.8 264.9L281.5 262.8L285.2 262.8L288.9 258.1L292.6 257.4L296.3 252.1L300.0 250.8L303.7 246.2L307.4 245.0L311.1 250.4L314.8 251.0L318.5 253.0L322.2 260.4L325.9 258.8L329.6 260.0L333.3 264.4L337.0 265.1L340.7 265.6L344.4 265.1L348.1 265.1L351.8 272.2L355.5 271.0L359.2 270.5L362.9 270.5L366.6 272.9L370.3 274.6L374.0 269.1L377.7 268.5L381.4 270.2L385.1 271.0L388.8 267.5L392.5 266.9L396.2 256.1L399.9 254.9L403.6 256.4L407.3 252.4L411.0 255.0L414.7 261.9L418.4 257.8L422.1 253.5L425.8 254.8L429.5 253.6L433.2 255.5L436.9 258.4L440.6 262.2L444.3 268.0L448.0 267.8L451.7 275.6L455.4 273.0L459.1 267.1L462.8 264.2L466.5 258.5L470.2 254.9L473.9 257.5L477.6 251.9L481.3 263.1L485.0 264.4L488.7 262.0L492.4 267.1L496.1 270.2L499.8 271.4L503.5 268.1L507.2 261.6L510.9 261.5L514.6 262.0L518.3 260.5L522.0 260.9L525.7 262.1L529.4 260.6L533.1 261.1L536.8 259.4L540.5 255.9L544.2 257.0L547.9 255.4L551.6 258.5L555.3 257.2L559.0 258.2L562.7 256.6L566.4 256.4L570.1 258.8L573.8 256.2L577.5 255.0L581.2 255.4L584.9 255.9L588.6 259.0L592.3 260.5L596.0 263.1L599.7 267.8L603.4 265.9L607.1 265.1L610.8 265.2L614.5 268.9L618.2 267.6L621.9 271.8L625.6 272.5L629.3 266.5L633.0 266.1L636.7 262.1L640.4 263.2L644.1 257.1L647.8 256.8L651.5 255.9L655.2 256.0L658.9 259.1L662.6 264.8L666.3 268.8L670.0 265.1L673.7 263.5L677.4 261.5L681.1 261.2L684.8 259.6L688.5 259.8L692.2 265.4L695.9 265.9L699.6 262.4L703.3 258.2L707.0 265.5L710.7 271.5L714.4 272.0L718.1 270.4L721.8 270.8L725.5 274.4L729.2 272.2L732.9 274.5L736.6 273.8L740.3 272.6L744.0 267.8L747.7 262.4L751.4 260.0L755.1 260.5L758.8 259.8L762.5 259.4L766.2 257.1L769.9 255.4L773.6 257.8L777.3 262.1L781.0 259.5L784.7 257.8L788.4 255.8L792.1 255.4L795.8 258.4L799.5 259.0L803.2 263.5L806.9 261.2L810.6 265.4L814.3 266.8L818.0 259.6L821.7 261.4L825.4 261.6L829.1 258.1L832.8 261.4L836.5 260.9L840.2 259.0L843.9 264.6L847.6 262.1L851.3 268.4L855.0 272.4L858.7 270.1L862.4 264.4L866.1 262.1L869.8 261.5L873.5 261.0L877.2 258.6L880.9 260.8L884.6 255.4L888.3 255.2L892.0 264.5L895.7 266.8L899.4 268.2L903.1 266.4L906.8 263.4L910.5 267.2L914.2 264.4L917.9 260.5L921.6 262.4L925.3 259.4L929.0 254.4L932.7 260.5L936.4 262.5L940.1 264.4L943.8 266.2L947.5 266.2L951.2 271.4L954.9 270.5L958.6 270.0L962.3 270.8L966.0 280.1L969.7 278.5L973.4 280.6L977.1 294.6" stroke="#ffdb5c" stroke-width="0.8" fill="none" stroke-linejoin="round"/><path d="M55.9 265.1h.01M59.5 281.1h.01M63.2 266.4h.01M67.0 256.1h.01M70.7 255.8h.01M74.3 255.4h.01M78.0 251.2h.01M81.8 251.0h.01M85.5 251.5h.01M89.2 258.5h.01M92.8 258.5h.01M96.5 256.0h.01M100.2 258.1h.01M104.0 265.0h.01M107.7 263.4h.01M111.3 263.9h.01M115.0 268.0h.01M118.8 265.2h.01M122.5 266.2h.01M126.2 259.1h.01M129.8 254.6h.01M133.6 258.1h.01M137.2 258.2h.01M140.9 257.2h.01M144.7 255.1h.01M148.3 251.8h.01M152.0 251.8h.01M155.7 257.8h.01M159.4 252.2h.01M163.1 251.9h.01M166.8 254.2h.01M170.5 248.6h.01M174.2 252.5h.01M177.9 249.4h.01M181.6 249.4h.01M185.3 250.8h.01M189.0 253.8h.01M192.7 249.4h.01M196.4 257.0h.01M200.1 261.5h.01M203.8 261.1h.01M207.5 263.6h.01M211.2 267.1h.01M214.9 266.2h.01M218.6 262.1h.01M222.3 260.6h.01M226.0 257.1h.01M229.7 257.5h.01M233.4 259.8h.01M237.1 258.4h.01M240.8 254.6h.01M244.5 252.5h.01M248.2 254.4h.01M251.9 252.8h.01M255.6 255.5h.01M259.3 262.2h.01M263.0 268.8h.01M266.7 264.8h.01M270.4 266.4h.01M274.1 263.1h.01M277.8 264.9h.01M281.5 262.8h.01M285.2 262.8h.01M288.9 258.1h.01M292.6 257.4h.01M296.3 252.1h.01M300.0 250.8h.01M303.7 246.2h.01M307.4 245.0h.01M311.1 250.4h.01M314.8 251.0h.01M318.5 253.0h.01M322.2 260.4h.01M325.9 258.8h.01M329.6 260.0h.01M333.3 264.4h.01M337.0 265.1h.01M340.7 265.6h.01M344.4 265.1h.01M348.1 265.1h.01M351.8 272.2h.01M355.5 271.0h.01M359.2 270.5h.01M362.9 270.5h.01M366.6 272.9h.01M370.3 274.6h.01M374.0 269.1h.01M377.7 268.5h.01M381.4 270.2h.01M385.1 271.0h.01M388.8 267.5h.01M392.5 266.9h.01M396.2 256.1h.01M399.9 254.9h.01M403.6 256.4h.01M407.3 252.4h.01M411.0 255.0h.01M414.7 261.9h.01M418.4 257.8h.01M422.1 253.5h.01M425.8 254.8h.01M429.5 253.6h.01M433.2 255.5h.01M436.9 258.4h.01M440.6 262.2h.01M444.3 268.0h.01M448.0 267.8h.01M451.7 275.6h.01M455.4 273.0h.01M459.1 267.1h.01M462.8 264.2h.01M466.5 258.5h.01M470.2 254.9h.01M473.9 257.5h.01M477.6 251.9h.01M481.3 263.1h.01M485.0 264.4h.01M488.7 262.0h.01M492.4 267.1h.01M496.1 270.2h.01M499.8 271.4h.01M503.5 268.1h.01M507.2 261.6h.01M510.9 261.5h.01M514.6 262.0h.01M518.3 260.5h.01M522.0 260.9h.01M525.7 262.1h.01M529.4 260.6h.01M533.1 261.1h.01M536.8 259.4h.01M540.5 255.9h.01M544.2 257.0h.01M547.9 255.4h.01M551.6 258.5h.01M555.3 257.2h.01M559.0 258.2h.01M562.7 256.6h.01M566.4 256.4h.01M570.1 258.8h.01M573.8 256.2h.01M577.5 255.0h.01M581.2 255.4h.01M584.9 255.9h.01M588.6 259.0h.01M592.3 260.5h.01M596.0 263.1h.01M599.7 267.8h.01M603.4 265.9h.01M607.1 265.1h.01M610.8 265.2h.01M614.5 268.9h.01M618.2 267.6h.01M621.9 271.8h.01M625.6 272.5h.01M629.3 266.5h.01M633.0 266.1h.01M636.7 262.1h.01M640.4 263.2h.01M644.1 257.1h.01M647.8 256.8h.01M651.5 255.9h.01M655.2 256.0h.01M658.9 259.1h.01M662.6 264.8h.01M666.3 268.8h.01M670.0 265.1h.01M673.7 263.5h.01M677.4 261.5h.01M681.1 261.2h.01M684.8 259.6h.01M688.5 259.8h.01M692.2 265.4h.01M695.9 265.9h.01M699.6 262.4h.01M703.3 258.2h.01M707.0 265.5h.01M710.7 271.5h.01M714.4 272.0h.01M718.1 270.4h.01M721.8 270.8h.01M725.5 274.4h.01M729.2 272.2h.01M732.9 274.5h.01M736.6 273.8h.01M740.3 272.6h.01M744.0 267.8h.01M747.7 262.4h.01M751.4 260.0h.01M755.1 260.5h.01M758.8 259.8h.01M762.5 259.4h.01M766.2 257.1h.01M769.9 255.4h.01M773.6 257.8h.01M777.3 262.1h.01M781.0 259.5h.01M784.7 257.8h.01M788.4 255.8h.01M792.1 255.4h.01M795.8 258.4h.01M799.5 259.0h.01M803.2 263.5h.01M806.9 261.2h.01M810.6 265.4h.01M814.3 266.8h.01M818.0 259.6h.01M821.7 261.4h.01M825.4 261.6h.01M829.1 258.1h.01M832.8 261.4h.01M836.5 260.9h.01M840.2 259.0h.01M843.9 264.6h.01M847.6 262.1h.01M851.3 268.4h.01M855.0 272.4h.01M858.7 270.1h.01M862.4 264.4h.01M866.1 262.1h.01M869.8 261.5h.01M873.5 261.0h.01M877.2 258.6h.01M880.9 260.8h.01M884.6 255.4h.01M888.3 255.2h.01M892.0 264.5h.01M895.7 266.8h.01M899.4 268.2h.01M903.1 266.4h.01M906.8 263.4h.01M910.5 267.2h.01M914.2 264.4h.01M917.9 260.5h.01M921.6 262.4h.01M925.3 259.4h.01M929.0 254.4h.01M932.7 260.5h.01M936.4 262.5h.01M940.1 264.4h.01M943.8 266.2h.01M947.5 266.2h.01M951.2 271.4h.01M954.9 270.5h.01M958.6 270.0h.01M962.3 270.8h.01M966.0 280.1h.01M969.7 278.5h.01M973.4 280.6h.01M977.1 294.6h.01" stroke="#ffdb5c" stroke-width="3.6" stroke-linecap="round" fill="none"/>
<rect x="418.8" y="516.1" width="10.4" height="3" rx="1" fill="#37a2da"/>
<rect x="513.6" y="516.1" width="10.4" height="3" rx="1" fill="#ffdb5c"/>
<text x="433.00" y="520.80" transform="rotate(0.05 433.00 520.80)" font-size="8.8" fill="#333" textLength="73.30" lengthAdjust="spacing">cp_moisture_outlet</text>
<text x="527.90" y="520.80" transform="rotate(0.05 527.90 520.80)" font-size="8.8" fill="#333" textLength="77.50" lengthAdjust="spacing">cpk_moisture_outlet</text>
<rect x="40.1" y="530.0" width="943.9" height="4.6" fill="#dfe5f3"/>
<rect x="40.1" y="534.6" width="943.9" height="13.2" fill="#e7eefd"/>
<path d="M40.3 537.90L44.0 544.43L47.8 545.69L51.6 545.33L55.4 545.23L59.2 545.31L63.0 545.44L66.8 545.41L70.6 545.52L74.4 545.67L78.2 545.81L81.9 545.71L85.7 545.56L89.5 545.81L93.3 546.10L97.1 546.23L100.9 546.33L104.7 546.31L108.5 546.14L112.3 546.00L116.1 545.81L119.9 546.08L123.6 546.05L127.4 545.91L131.2 545.87L135.0 545.57L138.8 545.33L142.6 545.53L146.4 545.61L150.2 545.57L154.0 545.64L157.7 545.28L161.5 545.33L165.3 545.26L169.1 545.08L172.9 545.15L176.7 545.54L180.5 545.28L184.3 545.25L188.1 545.36L191.9 545.47L195.6 545.63L199.4 545.61L203.2 545.86L207.0 546.02L210.8 546.10L214.6 545.92L218.4 546.05L222.2 545.97L226.0 545.94L229.8 545.81L233.6 545.67L237.3 545.74L241.1 545.49L244.9 545.43L248.7 545.57L252.5 545.57L256.3 545.62L260.1 545.77L263.9 545.61L267.7 545.64L271.5 545.76L275.2 545.76L279.0 545.87L282.8 545.73L286.6 545.52L290.4 545.30L294.2 545.13L298.0 545.06L301.8 545.29L305.6 545.28L309.4 545.41L313.1 545.47L316.9 545.61L320.7 545.63L324.5 545.70L328.3 545.59L332.1 545.77L335.9 545.94L339.7 545.94L343.5 546.16L347.3 546.12L351.0 546.19L354.8 546.09L358.6 545.96L362.4 546.15L366.2 546.21L370.0 546.30L373.8 546.00L377.6 545.94L381.4 545.70L385.2 545.86L388.9 545.55L392.7 545.53L396.5 545.56L400.3 545.33L404.1 545.53L407.9 545.33L411.7 545.52L415.5 545.51L419.3 545.67L423.1 545.60L426.8 545.85L430.6 545.98L434.4 546.16L438.2 546.06L442.0 546.07L445.8 546.11L449.6 546.00L453.4 545.91L457.2 545.81L461.0 545.81L464.8 545.81L468.5 545.68L472.3 545.53L476.1 545.73L479.9 545.76L483.7 545.57L487.5 545.59L491.3 545.65L495.1 545.45L498.9 545.47L502.7 545.14L506.4 545.21L510.2 545.09L514.0 545.08L517.8 544.95L521.6 545.01L525.4 545.03L529.2 545.22L533.0 545.44L536.8 545.32L540.5 545.58L544.3 545.81L548.1 545.86L551.9 545.76L555.7 545.86L559.5 545.90L563.3 545.86L567.1 545.91L570.9 545.85L574.7 545.81L578.5 545.88L582.2 545.59L586.0 545.54L589.8 545.81L593.6 545.73L597.4 545.93L601.2 546.07L605.0 545.90L608.8 545.94L612.6 545.99L616.4 545.86L620.1 545.87L623.9 545.87L627.7 545.58L631.5 545.85L635.3 545.75L639.1 545.92L642.9 545.86L646.7 545.98L650.5 545.88L654.3 545.78L658.1 545.75L661.8 546.10L665.6 546.22L669.4 546.02L673.2 545.81L677.0 545.63L680.8 545.90L684.6 545.61L688.4 545.84L692.2 546.06L696.0 546.18L699.7 545.86L703.5 545.85L707.3 545.86L711.1 546.08L714.9 546.15L718.7 545.95L722.5 546.09L726.3 546.02L730.1 545.98L733.8 546.18L737.6 546.26L741.4 546.41L745.2 546.42L749.0 546.18L752.8 546.16L756.6 546.22L760.4 546.12L764.2 546.12L768.0 545.93L771.8 545.68L775.5 545.79L779.3 545.62L783.1 545.78L786.9 545.81L790.7 545.85L794.5 545.87L798.3 546.02L802.1 546.10L805.9 546.23L809.7 546.18L813.4 546.18L817.2 546.14L821.0 545.88L824.8 545.98L828.6 546.10L832.4 545.93L836.2 545.79L840.0 545.75L843.8 545.56L847.6 545.68L851.3 545.82L855.1 545.99L858.9 546.09L862.7 546.02L866.5 545.84L870.3 545.81L874.1 545.91L877.9 545.90L881.7 546.03L885.5 546.02L889.3 545.70L893.0 545.54L896.8 545.76L900.6 545.78L904.4 545.94L908.2 545.98L912.0 545.95L915.8 546.11L919.6 545.94L923.4 546.06L927.1 546.20L930.9 546.12L934.7 545.77L938.5 546.12L942.3 546.08L946.1 546.08L949.9 546.10L953.7 545.93L957.5 546.11L961.3 545.99L965.0 546.02L968.8 546.17L972.6 546.50L976.4 545.58L980.2 545.19L984.0 545.11L984.0 547.8L40.1 547.8Z" fill="#cfdcfb" opacity="0.75"/>
<path d="M40.3 537.90L44.0 544.43L47.8 545.69L51.6 545.33L55.4 545.23L59.2 545.31L63.0 545.44L66.8 545.41L70.6 545.52L74.4 545.67L78.2 545.81L81.9 545.71L85.7 545.56L89.5 545.81L93.3 546.10L97.1 546.23L100.9 546.33L104.7 546.31L108.5 546.14L112.3 546.00L116.1 545.81L119.9 546.08L123.6 546.05L127.4 545.91L131.2 545.87L135.0 545.57L138.8 545.33L142.6 545.53L146.4 545.61L150.2 545.57L154.0 545.64L157.7 545.28L161.5 545.33L165.3 545.26L169.1 545.08L172.9 545.15L176.7 545.54L180.5 545.28L184.3 545.25L188.1 545.36L191.9 545.47L195.6 545.63L199.4 545.61L203.2 545.86L207.0 546.02L210.8 546.10L214.6 545.92L218.4 546.05L222.2 545.97L226.0 545.94L229.8 545.81L233.6 545.67L237.3 545.74L241.1 545.49L244.9 545.43L248.7 545.57L252.5 545.57L256.3 545.62L260.1 545.77L263.9 545.61L267.7 545.64L271.5 545.76L275.2 545.76L279.0 545.87L282.8 545.73L286.6 545.52L290.4 545.30L294.2 545.13L298.0 545.06L301.8 545.29L305.6 545.28L309.4 545.41L313.1 545.47L316.9 545.61L320.7 545.63L324.5 545.70L328.3 545.59L332.1 545.77L335.9 545.94L339.7 545.94L343.5 546.16L347.3 546.12L351.0 546.19L354.8 546.09L358.6 545.96L362.4 546.15L366.2 546.21L370.0 546.30L373.8 546.00L377.6 545.94L381.4 545.70L385.2 545.86L388.9 545.55L392.7 545.53L396.5 545.56L400.3 545.33L404.1 545.53L407.9 545.33L411.7 545.52L415.5 545.51L419.3 545.67L423.1 545.60L426.8 545.85L430.6 545.98L434.4 546.16L438.2 546.06L442.0 546.07L445.8 546.11L449.6 546.00L453.4 545.91L457.2 545.81L461.0 545.81L464.8 545.81L468.5 545.68L472.3 545.53L476.1 545.73L479.9 545.76L483.7 545.57L487.5 545.59L491.3 545.65L495.1 545.45L498.9 545.47L502.7 545.14L506.4 545.21L510.2 545.09L514.0 545.08L517.8 544.95L521.6 545.01L525.4 545.03L529.2 545.22L533.0 545.44L536.8 545.32L540.5 545.58L544.3 545.81L548.1 545.86L551.9 545.76L555.7 545.86L559.5 545.90L563.3 545.86L567.1 545.91L570.9 545.85L574.7 545.81L578.5 545.88L582.2 545.59L586.0 545.54L589.8 545.81L593.6 545.73L597.4 545.93L601.2 546.07L605.0 545.90L608.8 545.94L612.6 545.99L616.4 545.86L620.1 545.87L623.9 545.87L627.7 545.58L631.5 545.85L635.3 545.75L639.1 545.92L642.9 545.86L646.7 545.98L650.5 545.88L654.3 545.78L658.1 545.75L661.8 546.10L665.6 546.22L669.4 546.02L673.2 545.81L677.0 545.63L680.8 545.90L684.6 545.61L688.4 545.84L692.2 546.06L696.0 546.18L699.7 545.86L703.5 545.85L707.3 545.86L711.1 546.08L714.9 546.15L718.7 545.95L722.5 546.09L726.3 546.02L730.1 545.98L733.8 546.18L737.6 546.26L741.4 546.41L745.2 546.42L749.0 546.18L752.8 546.16L756.6 546.22L760.4 546.12L764.2 546.12L768.0 545.93L771.8 545.68L775.5 545.79L779.3 545.62L783.1 545.78L786.9 545.81L790.7 545.85L794.5 545.87L798.3 546.02L802.1 546.10L805.9 546.23L809.7 546.18L813.4 546.18L817.2 546.14L821.0 545.88L824.8 545.98L828.6 546.10L832.4 545.93L836.2 545.79L840.0 545.75L843.8 545.56L847.6 545.68L851.3 545.82L855.1 545.99L858.9 546.09L862.7 546.02L866.5 545.84L870.3 545.81L874.1 545.91L877.9 545.90L881.7 546.03L885.5 546.02L889.3 545.70L893.0 545.54L896.8 545.76L900.6 545.78L904.4 545.94L908.2 545.98L912.0 545.95L915.8 546.11L919.6 545.94L923.4 546.06L927.1 546.20L930.9 546.12L934.7 545.77L938.5 546.12L942.3 546.08L946.1 546.08L949.9 546.10L953.7 545.93L957.5 546.11L961.3 545.99L965.0 546.02L968.8 546.17L972.6 546.50L976.4 545.58L980.2 545.19L984.0 545.11" stroke="#a4bdf7" stroke-width="0.8" fill="none"/>
<path d="M40.1 534.6H984.0" stroke="#d2dbee" stroke-width="0.8"/>
<path d="M40.4 534.2V548.0M983.6 534.2V548.0" stroke="#b4bfd6" stroke-width="0.7"/>
<rect x="39.2" y="536.6" width="3.2" height="9.3" rx="1.2" fill="#fff" stroke="#acb8d1" stroke-width="0.8"/>
<rect x="981.5" y="536.6" width="3.2" height="9.3" rx="1.2" fill="#fff" stroke="#acb8d1" stroke-width="0.8"/>
<path d="M510.4 531.6v1.2M512 531.6v1.2M513.6 531.6v1.2" stroke="#fff" stroke-width="0.9" opacity="0.85"/>
</svg>
</section>
<footer>
<svg class="layer" width="1024" height="579" viewBox="0 0 1024 579" font-family="Liberation Sans, Noto Sans CJK SC, sans-serif">
<text x="13.30" y="571.10" transform="rotate(0.05 13.30 571.10)" font-size="8.8" fill="#8f9299" textLength="58.00" lengthAdjust="spacing">TDengine IDMP</text>
<text x="72.80" y="571.24" font-size="8.8" fill="#8f9299" stroke="#8f9299" stroke-width="0.07">版本</text>
<text x="92.60" y="571.10" transform="rotate(0.05 92.60 571.10)" font-size="8.8" fill="#8f9299" textLength="25.70" lengthAdjust="spacing">1.0.5.1</text>
<path transform="translate(972.10 561.40) scale(0.012305)" d="M240.448 240.448a384 384 0 1 0 559.424 525.696 448 448 0 0 1-542.016-542.08 390.592 390.592 0 0 0-17.408 16.384zm181.056 362.048a384 384 0 0 0 525.632 16.384A448 448 0 1 1 405.056 76.800a384 384 0 0 0 16.448 525.696z" fill="#2f5bea"/>
<text x="994.30" y="571.10" transform="rotate(0.05 994.30 571.10)" font-size="9.5" fill="#2f5bea" textLength="12.70" lengthAdjust="spacing" stroke="#2f5bea" stroke-width="0.12">EN</text>
<path d="M0 571.6C0.3 575 1.2 577.6 3.2 579H0Z" fill="#000"/>
<path d="M1024 576.6C1023.7 577.8 1023.3 578.5 1022.5 579H1024Z" fill="#444"/>
</svg>
</footer>
</body>
</html>
